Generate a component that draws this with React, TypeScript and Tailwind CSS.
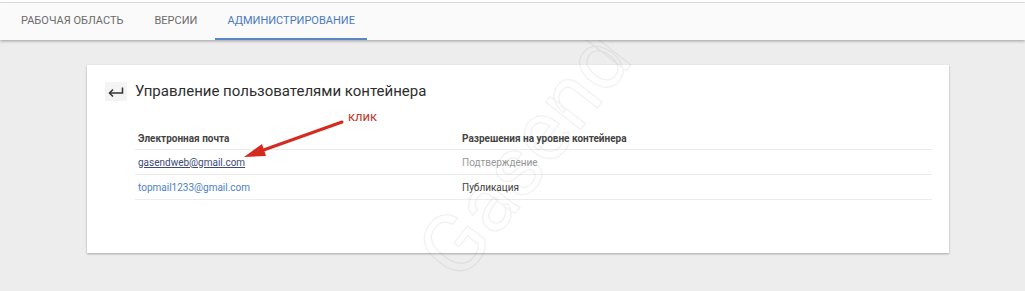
import React from "react";

export default function App() {
  return (
    <div
      className="relative w-[1025px] h-[291px] overflow-hidden bg-[#ededed]"
      style={{ fontFamily: "Roboto, 'Liberation Sans', sans-serif" }}
    >
      {/* top strip */}
      <div className="h-[3px] bg-white border-b border-[#e6e6e6]" />
      {/* tabs */}
      <div className="h-[37px] bg-[#fafafa] shadow-[0_1px_3px_rgba(0,0,0,0.35)] flex items-stretch pl-[21px] relative z-10">
        <div className="flex items-center text-[11px] text-[#6b6b6b] pr-[31px]">РАБОЧАЯ ОБЛАСТЬ</div>
        <div className="flex items-center text-[11px] text-[#6b6b6b] pr-[18px]">ВЕРСИИ</div>
        <div className="flex items-center text-[11px] text-[#4b79bd] px-[12px] border-b-2 border-[#5a86c4] pt-[2px]">
          АДМИНИСТРИРОВАНИЕ
        </div>
      </div>

      {/* card */}
      <div className="ml-[87px] mt-[25px] w-[862px] h-[188px] bg-white shadow-[0_1px_2px_rgba(0,0,0,0.3)] pt-[16px] pl-[18px] pr-[17px]">
        <div className="flex items-center h-[21px]">
          <div className="w-[22px] h-[19px] bg-[#f4f4f4] flex items-center justify-center text-[#333]">
            <svg width="16" height="10" viewBox="0 0 16 10" fill="none" stroke="#333" strokeWidth="1.5">
              <path d="M14.5 0.5 V6 H1.5" />
              <path d="M5 2.5 L1.5 6 L5 9.5" />
            </svg>
          </div>
          <div className="ml-[8px] text-[15px] text-[#2e2e2e]">Управление пользователями контейнера</div>
        </div>

        <div className="relative ml-[30px] mt-[26px] w-[797px]">
          <div className="flex h-[22px] items-center border-b border-[#ececec] text-[10px] font-bold text-[#444]">
            <div className="w-[327px] pl-[3px]">Электронная почта</div>
            <div>Разрешения на уровне контейнера</div>
          </div>
          <div className="flex h-[25px] items-center border-b border-[#ececec] text-[10px]">
            <div className="w-[327px] pl-[3px] text-[#3d4a78] underline">gasendweb@gmail.com</div>
            <div className="text-[#9a9a9a]">Подтверждение</div>
          </div>
          <div className="flex h-[25px] items-center border-b border-[#ececec] text-[10px]">
            <div className="w-[327px] pl-[3px] text-[#4d7fc6]">topmail1233@gmail.com</div>
            <div className="text-[#444]">Публикация</div>
          </div>
        </div>
      </div>

      {/* annotation */}
      <div className="absolute left-[348px] top-[110px] text-[13px] text-[#c0392b] leading-none">клик</div>
      <svg className="absolute left-0 top-0" width="1025" height="291">
        <line x1="342" y1="122" x2="258" y2="152" stroke="#d42a20" strokeWidth="3" strokeLinecap="round" />
        <polygon points="244,157 262,144 266,156" fill="#d42a20" />
      </svg>

      {/* watermark */}
      <div className="absolute left-[325px] top-[105px] w-[400px] h-[100px] leading-[100px] text-center text-[84px] text-transparent [-webkit-text-stroke:1.5px_rgba(0,0,0,0.05)] -rotate-[52deg] pointer-events-none select-none">
        Gasend
      </div>
    </div>
  );
}
